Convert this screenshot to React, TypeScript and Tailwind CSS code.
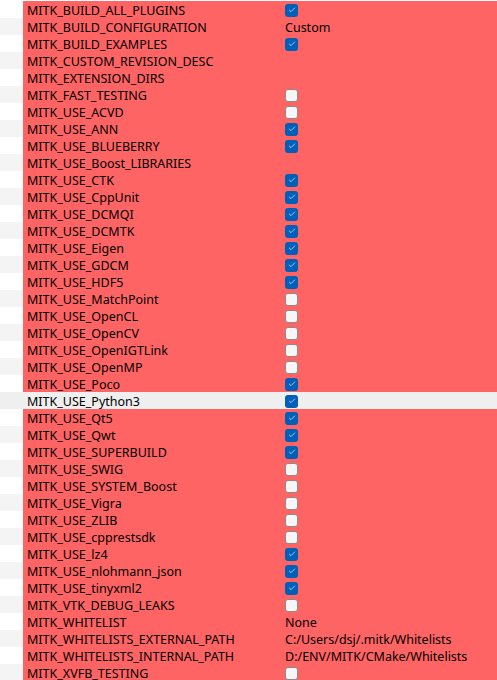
import { Check } from 'lucide-react';

type Row = { name: string; value?: string; checked?: boolean; bool?: boolean };

const rows: Row[] = [
  { name: 'MITK_BUILD_ALL_PLUGINS', bool: true, checked: true },
  { name: 'MITK_BUILD_CONFIGURATION', value: 'Custom' },
  { name: 'MITK_BUILD_EXAMPLES', bool: true, checked: true },
  { name: 'MITK_CUSTOM_REVISION_DESC', value: '' },
  { name: 'MITK_EXTENSION_DIRS', value: '' },
  { name: 'MITK_FAST_TESTING', bool: true, checked: false },
  { name: 'MITK_USE_ACVD', bool: true, checked: false },
  { name: 'MITK_USE_ANN', bool: true, checked: true },
  { name: 'MITK_USE_BLUEBERRY', bool: true, checked: true },
  { name: 'MITK_USE_Boost_LIBRARIES', value: '' },
  { name: 'MITK_USE_CTK', bool: true, checked: true },
  { name: 'MITK_USE_CppUnit', bool: true, checked: true },
  { name: 'MITK_USE_DCMQI', bool: true, checked: true },
  { name: 'MITK_USE_DCMTK', bool: true, checked: true },
  { name: 'MITK_USE_Eigen', bool: true, checked: true },
  { name: 'MITK_USE_GDCM', bool: true, checked: true },
  { name: 'MITK_USE_HDF5', bool: true, checked: true },
  { name: 'MITK_USE_MatchPoint', bool: true, checked: false },
  { name: 'MITK_USE_OpenCL', bool: true, checked: false },
  { name: 'MITK_USE_OpenCV', bool: true, checked: false },
  { name: 'MITK_USE_OpenIGTLink', bool: true, checked: false },
  { name: 'MITK_USE_OpenMP', bool: true, checked: false },
  { name: 'MITK_USE_Poco', bool: true, checked: true },
  { name: 'MITK_USE_Python3', bool: true, checked: true },
  { name: 'MITK_USE_Qt5', bool: true, checked: true },
  { name: 'MITK_USE_Qwt', bool: true, checked: true },
  { name: 'MITK_USE_SUPERBUILD', bool: true, checked: true },
  { name: 'MITK_USE_SWIG', bool: true, checked: false },
  { name: 'MITK_USE_SYSTEM_Boost', bool: true, checked: false },
  { name: 'MITK_USE_Vigra', bool: true, checked: false },
  { name: 'MITK_USE_ZLIB', bool: true, checked: false },
  { name: 'MITK_USE_cpprestsdk', bool: true, checked: false },
  { name: 'MITK_USE_lz4', bool: true, checked: true },
  { name: 'MITK_USE_nlohmann_json', bool: true, checked: true },
  { name: 'MITK_USE_tinyxml2', bool: true, checked: true },
  { name: 'MITK_VTK_DEBUG_LEAKS', bool: true, checked: false },
  { name: 'MITK_WHITELIST', value: 'None' },
  { name: 'MITK_WHITELISTS_EXTERNAL_PATH', value: 'C:/Users/dsj/.mitk/Whitelists' },
  { name: 'MITK_WHITELISTS_INTERNAL_PATH', value: 'D:/ENV/MITK/CMake/Whitelists' },
  { name: 'MITK_XVFB_TESTING', bool: true, checked: false },
];

const SELECTED = 'MITK_USE_Python3';

function CheckBox({ checked }: { checked: boolean }) {
  if (checked) {
    return (
      <span className="flex h-[13px] w-[13px] items-center justify-center rounded-[3px] bg-[#005fb8]">
        <Check className="h-[8px] w-[8px] text-white" strokeWidth={2} />
      </span>
    );
  }
  return <span className="block h-[13px] w-[13px] rounded-[3px] border border-[#8a8a8a] bg-[#f6f6f6]" />;
}

export default function App() {
  return (
    <div
      className="h-[680px] w-[497px] overflow-hidden bg-white pt-px text-[12.5px] text-black"
      style={{ fontFamily: '"Noto Sans", "Open Sans", sans-serif' }}
    >
      {rows.map((row, i) => {
        const selected = row.name === SELECTED;
        const gutter = selected ? 'bg-[#efefef]' : i % 2 === 1 ? 'bg-[#f4f4f4]' : 'bg-white';
        return (
          <div key={row.name} className="flex h-[17px] items-center">
            <div className={`h-full w-[23px] ${gutter}`} />
            <div className={`flex h-full flex-1 items-center ${selected ? 'bg-[#efefef]' : 'bg-[#ff6464]'}`}>
              <div className="w-[258px] truncate pl-[4px] pt-px leading-[17px]">{row.name}</div>
              <div className="flex flex-1 items-center pl-[4px] pt-px leading-[17px]">
                {row.bool ? <CheckBox checked={!!row.checked} /> : row.value}
              </div>
            </div>
          </div>
        );
      })}
    </div>
  );
}
